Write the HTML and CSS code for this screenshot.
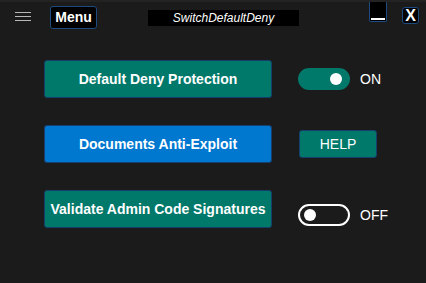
FILE: index.html
```
<!doctype html>
<html lang="en">
<head>
	<meta charset="UTF-8">
	<title>SwitchDefaultDeny</title>
	<link rel="stylesheet" href="styles.css">
</head>
<body>
	<div class="top">
		<div class="burger"><span></span><span></span><span></span></div>
		<div class="menu">Menu</div>
		<div class="title">SwitchDefaultDeny</div>
		<div class="min"></div>
		<div class="close">X</div>
	</div>
	<div class="main">
		<div class="btn teal">Default Deny Protection</div>
		<div class="side">
			<div class="toggle on"><i></i></div>
			<span class="lbl">ON</span>
		</div>
		<div class="btn blue">Documents Anti-Exploit</div>
		<div class="side">
			<div class="help">HELP</div>
		</div>
		<div class="btn teal">Validate Admin Code Signatures</div>
		<div class="side low">
			<div class="toggle"><i></i></div>
			<span class="lbl">OFF</span>
		</div>
	</div>
</body>
</html>
```
FILE: styles.css
```
*{margin:0px;padding:0px;box-sizing:border-box;}
body{
	background:#1b1b1b;
	width:426px;
	height:283px;
	overflow:hidden;
	font-family:"Liberation Sans",Arial,sans-serif;
	color:#fff;
	border-top:2px solid #232323;
}
.top{
	display:flex;
	align-items:flex-start;
	height:30px;
}
.burger{
	width:16px;
	margin:10px 0 0 15px;
}
.burger span{
	display:block;
	height:1px;
	background:#b8b8b8;
	margin-bottom:3px;
}
.menu{
	margin:4px 0 0 19px;
	width:47px;
	height:23px;
	background:#000;
	border:1px solid #1d4a80;
	border-radius:3px;
	font-weight:bold;
	font-size:14px;
	line-height:21px;
	text-align:center;
}
.title{
	margin:8px 0 0 51px;
	width:151px;
	height:16px;
	background:#000;
	font-style:italic;
	font-size:12px;
	line-height:16px;
	text-align:center;
}
.min{
	margin:-2px 0 0 70px;
	width:18px;
	height:22px;
	background:#000;
	border:1px solid #1d4a80;
	border-top:none;
	border-radius:0 0 2px 2px;
	position:relative;
}
.min:after{/*下划线*/
	content:"";
	position:absolute;
	left:1px;
	right:1px;
	bottom:1px;
	height:2px;
	background:#fff;
}
.close{
	margin:5px 0 0 15px;
	width:17px;
	height:17px;
	background:#000;
	border:1px solid #1d4a80;
	border-radius:3px;
	font-weight:bold;
	font-size:16px;
	line-height:15px;
	text-align:center;
}
.main{
	display:grid;
	grid-template-columns:228px auto;
	column-gap:26px;
	row-gap:27px;
	padding:28px 0 0 44px;
	align-items:center;
}
.btn{
	height:38px;
	border:1px solid #163f6e;
	border-radius:3px;
	font-weight:bold;
	font-size:14px;
	line-height:36px;
	text-align:center;
	white-space:nowrap;
}
.teal{background:#00786a;}
.blue{background:#0078d0;}
.side{
	display:flex;
	align-items:center;
}
.side.low{margin-top:11px;}
.toggle{
	width:52px;
	height:22px;
	border-radius:11px;
	border:2px solid #fff;
	display:flex;
	align-items:center;
	padding:0 4px;
}
.toggle i{
	width:12px;
	height:12px;
	border-radius:50%;
	background:#fff;
}
.toggle.on{
	background:#00786a;
	border-color:#00786a;
	justify-content:flex-end;
	padding:0 6px;
}
.lbl{
	font-size:14px;
	margin-left:10px;
}
.help{
	margin-left:1px;
	width:78px;
	height:28px;
	background:#00786a;
	border:1px solid #163f6e;
	border-radius:3px;
	font-size:14px;
	line-height:26px;
	text-align:center;
}
```
